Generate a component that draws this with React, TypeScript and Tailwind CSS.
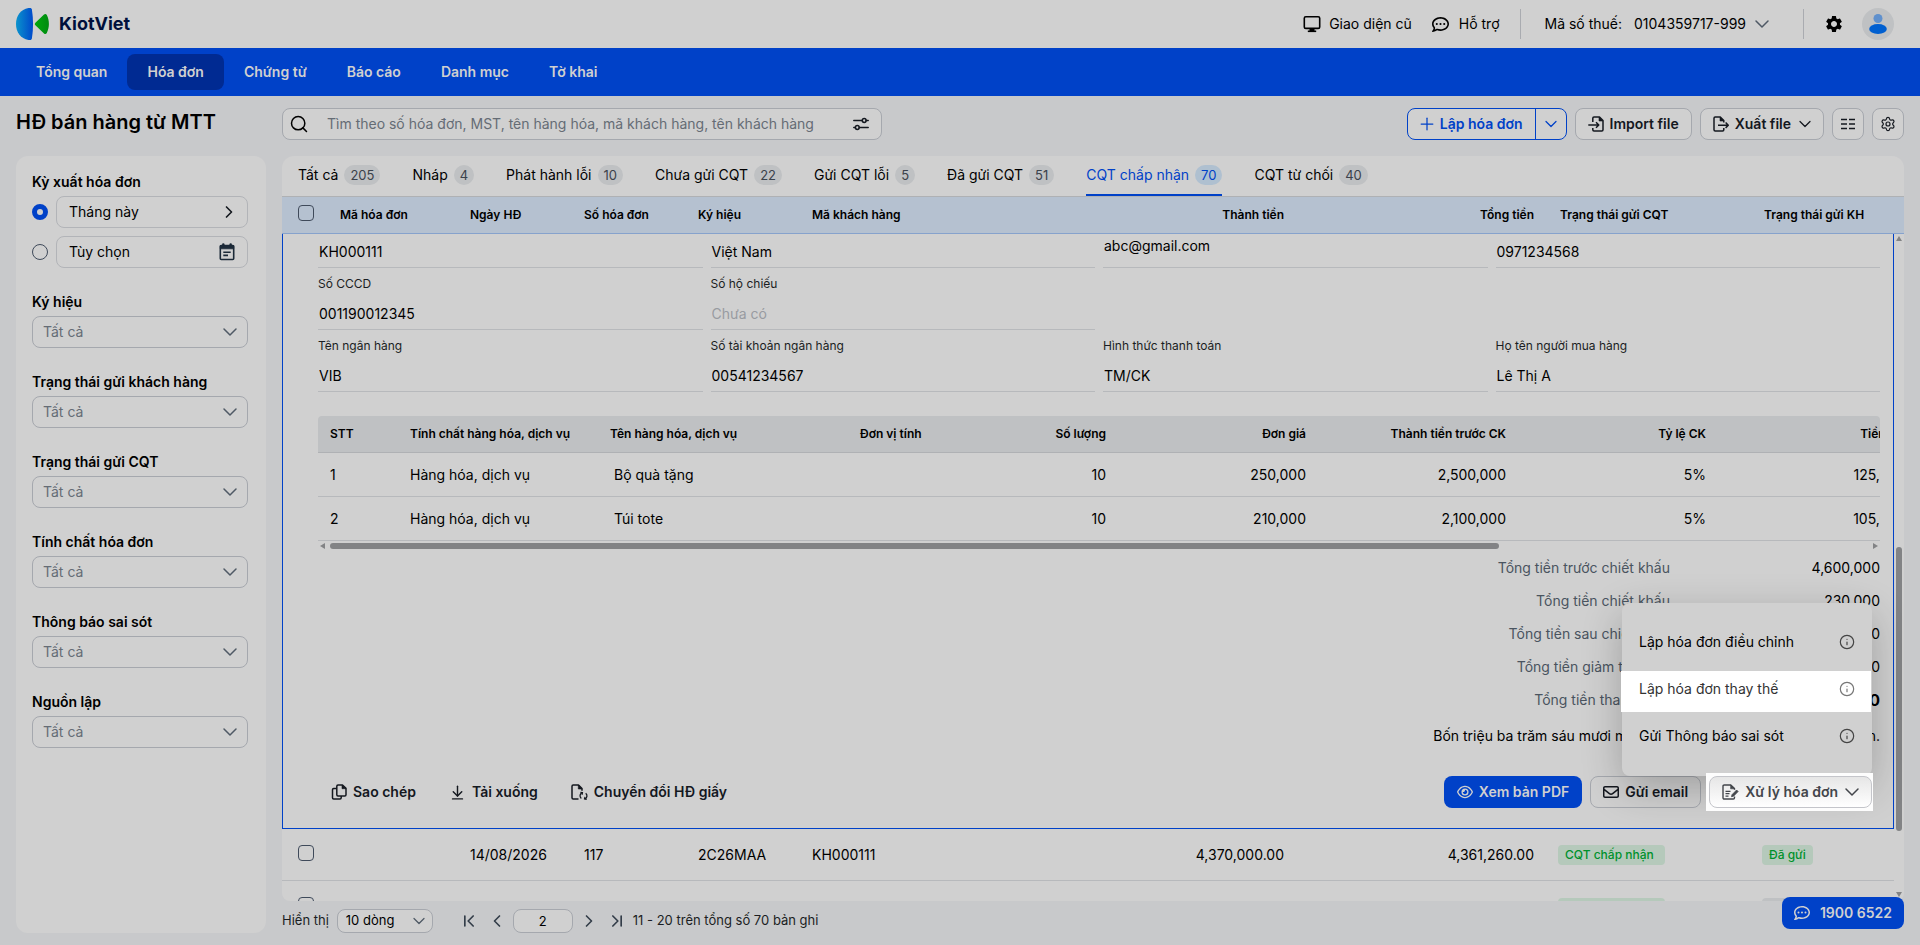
import type { ReactNode } from "react";
import {
  ArrowDownToLine,
  ChevronDown,
  ChevronFirst,
  ChevronLast,
  ChevronLeft,
  ChevronRight,
  Info,
  Plus,
  Search,
  Settings,
} from "lucide-react";
import { FaRegCommentDots, FaRegEnvelope, FaRegEye } from "react-icons/fa6";
import { MdSettings } from "react-icons/md";

const NAV = ["Tổng quan", "Hóa đơn", "Chứng từ", "Báo cáo", "Danh mục", "Tờ khai"];

const FILTERS = [
  { id: "symbol", label: "Ký hiệu" },
  { id: "customer-status", label: "Trạng thái gửi khách hàng" },
  { id: "tax-status", label: "Trạng thái gửi CQT" },
  { id: "kind", label: "Tính chất hóa đơn" },
  { id: "mistake", label: "Thông báo sai sót" },
  { id: "source", label: "Nguồn lập" },
];

const TABS = [
  { label: "Tất cả", count: 205 },
  { label: "Nháp", count: 4 },
  { label: "Phát hành lỗi", count: 10 },
  { label: "Chưa gửi CQT", count: 22 },
  { label: "Gửi CQT lỗi", count: 5 },
  { label: "Đã gửi CQT", count: 51 },
  { label: "CQT chấp nhận", count: 70 },
  { label: "CQT từ chối", count: 40 },
];

const ITEMS = [
  { name: "Bộ quà tặng", qty: "10", price: "250,000", amount: "2,500,000", rate: "5%", discount: "125,000" },
  { name: "Túi tote", qty: "10", price: "210,000", amount: "2,100,000", rate: "5%", discount: "105,000" },
];

const TOTALS = [
  { label: "Tổng tiền trước chiết khấu", value: "4,600,000" },
  { label: "Tổng tiền chiết khấu", value: "230,000" },
  { label: "Tổng tiền sau chiết khấu", value: "4,370,000" },
  { label: "Tổng tiền giảm trừ thuế", value: "8,740" },
];

const MENU = ["Lập hóa đơn điều chỉnh", "Lập hóa đơn thay thế", "Gửi Thông báo sai sót"];
const ACTIVE_MENU = "Lập hóa đơn thay thế";

/* ---------- icons ---------- */

function Logo() {
  return (
    <svg className="w-[33px] h-8" viewBox="0 0 33 32">
      <defs>
        <linearGradient id="logo-blue" x1="0" x2="1">
          <stop offset="0" stopColor="#0a93cc" />
          <stop offset="1" stopColor="#0049cb" />
        </linearGradient>
        <linearGradient id="logo-green" x1="0" x2="1">
          <stop offset="0" stopColor="#00a80c" />
          <stop offset="1" stopColor="#008a10" />
        </linearGradient>
      </defs>
      <path d="M12.5 0h1.6c1 0 1.6.6 1.8 1.5 1.5 9.500 1.500 19.500 0 29-.2.9-.8 1.500-1.800 1.500h-1.600C4.500 30.500 0 24 0 16S4.500 1.500 12.500 0z" fill="url(#logo-blue)" />
      <path d="M19.400 14.700 28 6.600c1-.9 2.200-.7 2.800.5 2.800 5.500 2.800 12.300 0 17.800-.6 1.200-1.800 1.400-2.800.5l-8.600-8.100c-.8-.8-.8-1.800 0-2.600z" fill="url(#logo-green)" />
    </svg>
  );
}

function MonitorIcon() {
  return (
    <svg className="w-[18px] h-[18px]" viewBox="0 0 18 18" fill="none" stroke="currentColor" strokeWidth="1.600">
      <rect x="1.300" y="1.800" width="15.400" height="11.600" rx="1.500" />
      <path d="M6.500 14h5v2h-5z" fill="currentColor" stroke="none" />
      <path d="M4.800 16.300h8.400" />
    </svg>
  );
}

function CalendarIcon() {
  return (
    <svg className="w-4 h-[18px]" viewBox="0 0 16 18" fill="none" stroke="currentColor" strokeWidth="1.600">
      <rect x="1.300" y="2.500" width="13.400" height="14" rx="1" />
      <path d="M1.300 2.500h13.400v3.300H1.300zM3.600.8h1.500v2H3.600zM10.900.8h1.500v2h-1.500z" fill="currentColor" strokeWidth=".8" />
      <path d="M4.300 9.200h7.400M4.300 12.400h4.700" />
    </svg>
  );
}

function SlidersIcon() {
  return (
    <svg className="w-4 h-[14px]" viewBox="0 0 16 14" fill="none" stroke="currentColor" strokeWidth="1.500" strokeLinecap="round">
      <path d="M.8 3.500h8.400M13.200 3.500h2M.8 10.500h1.400M6.300 10.500h8.900" />
      <circle cx="11.200" cy="3.500" r="1.900" />
      <circle cx="4.300" cy="10.500" r="1.900" />
    </svg>
  );
}

function ImportIcon() {
  return (
    <svg className="w-4 h-4" viewBox="0 0 16 16" fill="none" stroke="currentColor" strokeWidth="1.500" strokeLinejoin="round">
      <path d="M4.800 6V2.200C4.800 1.500 5.300 1 6 1h5.500L15 4.500v9.300c0 .7-.5 1.200-1.200 1.200H6c-.7 0-1.200-.5-1.200-1.200V12" />
      <path d="M11 1v4h4z" fill="currentColor" strokeWidth=".6" />
      <path d="M.3 9h10M8 6.200 10.800 9 8 11.800" />
    </svg>
  );
}

function ExportIcon() {
  return (
    <svg className="w-4 h-4" viewBox="0 0 16 16" fill="none" stroke="currentColor" strokeWidth="1.500" strokeLinejoin="round">
      <path d="M10.800 6.500V4.500L7.300 1H2.200C1.500 1 1 1.500 1 2.200v11.600c0 .7.500 1.200 1.200 1.200h7.400c.7 0 1.200-.5 1.200-1.200V12" />
      <path d="M7 1v4h4z" fill="currentColor" strokeWidth=".6" />
      <path d="M5 9.200h10M12.600 6.500l2.700 2.700-2.700 2.700" />
    </svg>
  );
}

function ColumnsIcon() {
  return (
    <svg className="w-[14px] h-3" viewBox="0 0 14 12" stroke="currentColor" strokeWidth="1.300">
      <path d="M0 1.500h6M8 1.500h6M0 6h6M8 6h6M0 10.500h6M8 10.500h6" />
    </svg>
  );
}

function CopyIcon() {
  return (
    <svg className="w-4 h-4" viewBox="0 0 16 16" fill="none" stroke="currentColor" strokeWidth="1.500" strokeLinejoin="round">
      <path d="M5.800 2.200C5.800 1.500 6.300 1 7 1h4.500L15 4.200v6.600c0 .7-.5 1.200-1.200 1.200H7c-.7 0-1.200-.5-1.200-1.200z" />
      <path d="M11 1v3.700h4z" fill="currentColor" strokeWidth=".6" />
      <path d="M5.800 4.500H2.700c-.7 0-1.200.5-1.200 1.200v8.100c0 .7.500 1.200 1.200 1.200H9c.7 0 1.200-.5 1.200-1.200V12" />
    </svg>
  );
}

function ConvertIcon() {
  return (
    <svg className="w-[17px] h-4" viewBox="0 0 17 16" fill="none" stroke="currentColor" strokeWidth="1.500" strokeLinejoin="round">
      <path d="M7.500 15H2.200C1.500 15 1 14.500 1 13.800V2.200C1 1.500 1.500 1 2.200 1h5.300L11 4.500v2.300" />
      <path d="M7.300 1v4H11z" fill="currentColor" strokeWidth=".6" />
      <path d="M11.300 8.600c-2.600.8-3 4.200-1 5.800M13.700 15c2.600-.8 3-4.200 1-5.800" strokeWidth="1.300" />
      <path d="M9.300 8.200l2.300.4-.6 2.200M15.700 15.400l-2.300-.4.6-2.200" strokeWidth="1.100" />
    </svg>
  );
}

function EditFileIcon() {
  return (
    <svg className="w-[17px] h-4" viewBox="0 0 17 16" fill="none" stroke="currentColor" strokeWidth="1.400" strokeLinejoin="round">
      <path d="M12.500 12.500v1.300c0 .7-.5 1.200-1.200 1.200H2.200C1.500 15 1 14.500 1 13.800V2.200C1 1.500 1.500 1 2.200 1h6.600l3.700 3.500v1.300" />
      <path d="M8.600 1v3.800h3.900z" fill="currentColor" strokeWidth=".6" />
      <path d="M3.500 7.300h5M3.500 9.700h4M3.500 12.200h3" strokeWidth="1.200" />
      <path d="m9.500 12.700.5-2L14.600 6l1.500 1.500-4.600 4.700z" fill="currentColor" strokeWidth=".8" />
    </svg>
  );
}

function Avatar() {
  return (
    <span className="flex w-8 h-8 items-center justify-center rounded-full bg-[#bfc1c3]">
      <svg className="w-[18px] h-5" viewBox="0 0 18 20">
        <circle cx="9" cy="4.500" r="4.500" fill="#5f90cd" />
        <ellipse cx="9" cy="15" rx="8.800" ry="5" fill="#005fd0" />
      </svg>
    </span>
  );
}

/* ---------- small parts ---------- */

interface ToolButtonProps {
  children: ReactNode;
  className?: string;
  label?: string;
}

function ToolButton({ children, className = "", label }: ToolButtonProps) {
  return (
    <button
      type="button"
      aria-label={label}
      className={`flex h-8 items-center gap-1.5 rounded-lg border border-[#a5a8ae] bg-[#d0d0d0] text-sm font-semibold text-[#14181f] ${className}`}
    >
      {children}
    </button>
  );
}

function Checkbox({ label }: { label: string }) {
  return (
    <input
      type="checkbox"
      aria-label={label}
      className="block w-4 h-4 appearance-none rounded border border-[#3f4a5a]"
    />
  );
}

function Field({ id, label, value, placeholder }: { id: string; label: string; value?: string; placeholder?: string }) {
  return (
    <div className="border-b border-[#b7b9bc] pt-2 pb-[5px]">
      <label htmlFor={id} className="block text-xs leading-4 text-[#1b1e23]">
        {label}
      </label>
      <input
        id={id}
        readOnly
        value={value ?? ""}
        placeholder={placeholder}
        className="mt-3 block h-5 w-full pl-px text-sm leading-5 placeholder:text-[#989ba1]"
      />
    </div>
  );
}

function Tag({ children, className = "" }: { children: ReactNode; className?: string }) {
  return (
    <span className={`inline-block h-5 rounded bg-[#b5c9bb] px-[7px] align-middle text-xs leading-5 font-medium text-[#00912b] ${className}`}>
      {children}
    </span>
  );
}

/* ---------- page sections ---------- */

function TopBar() {
  return (
    <header className="flex h-12 shrink-0 items-center bg-[#d0d0d0] pr-[26px] pl-4 text-sm">
      <a href="#home" className="flex items-center gap-2.5">
        <Logo />
        <span className="text-lg font-bold text-[#00103c]">KiotViet</span>
      </a>
      <div className="ml-auto flex items-center">
        <a href="#old" className="flex items-center gap-2">
          <MonitorIcon />
          Giao diện cũ
        </a>
        <a href="#help" className="ml-5 flex items-center gap-2.5">
          <FaRegCommentDots className="w-[17px] h-[17px]" />
          Hỗ trợ
        </a>
        <span className="mr-6 ml-5 h-[30px] w-px bg-[#a9abb0]" />
        <button type="button" className="flex items-center">
          <span>Mã số thuế:</span>
          <span className="mr-1 ml-3">0104359717-999</span>
          <ChevronDown className="w-6 h-6 text-[#4f5965]" strokeWidth={1.5} />
        </button>
        <span className="mr-5 ml-[29px] h-[30px] w-px bg-[#a9abb0]" />
        <button type="button" aria-label="Cài đặt" className="mr-[18px]">
          <MdSettings className="w-5 h-5" />
        </button>
        <button type="button" aria-label="Tài khoản">
          <Avatar />
        </button>
      </div>
    </header>
  );
}

function Sidebar() {
  return (
    <aside className="flex-1 rounded-xl bg-[#d0d0d0] py-4 pr-[18px] pl-4">
      <fieldset className="text-sm">
        <legend className="mb-1 font-semibold leading-5">Kỳ xuất hóa đơn</legend>
        <div className="flex items-center gap-2">
          <input
            type="radio"
            name="period"
            defaultChecked
            aria-label="Tháng này"
            className="w-4 h-4 appearance-none rounded-full border-[5px] border-[#0041c8]"
          />
          <button type="button" className="flex h-8 flex-1 items-center justify-between rounded-lg border border-[#b2b4b8] pr-2 pl-3">
            Tháng này
            <ChevronRight className="w-5 h-5 text-[#14181f]" />
          </button>
        </div>
        <div className="mt-2 flex items-center gap-2">
          <input
            type="radio"
            name="period"
            aria-label="Tùy chọn"
            className="w-4 h-4 appearance-none rounded-full border border-[#3f4a5a]"
          />
          <button type="button" className="flex h-8 flex-1 items-center justify-between rounded-lg border border-[#b2b4b8] px-3">
            Tùy chọn
            <span className="text-[#1c2a38]">
              <CalendarIcon />
            </span>
          </button>
        </div>
      </fieldset>

      {FILTERS.map((f) => (
        <div key={f.id} className="mt-6 text-sm">
          <label htmlFor={f.id} className="mb-1 block font-semibold leading-5">
            {f.label}
          </label>
          <div className="relative">
            <select id={f.id} className="h-8 w-full appearance-none rounded-lg border border-[#a5a8ae] px-2.5 text-[#656c75]">
              <option>Tất cả</option>
            </select>
            <ChevronDown
              className="pointer-events-none absolute top-1 right-1.5 w-6 h-6 text-[#4f5965]"
              strokeWidth={1.5}
            />
          </div>
        </div>
      ))}
    </aside>
  );
}

function Toolbar() {
  return (
    <div className="flex items-center gap-2">
      <div className="mr-auto flex h-8 w-[600px] items-center rounded-lg border border-[#a5a8ae] bg-[#d0d0d0] px-1.5">
        <Search className="w-5 h-5" strokeWidth={1.8} />
        <input
          type="search"
          aria-label="Tìm kiếm"
          placeholder="Tìm theo số hóa đơn, MST, tên hàng hóa, mã khách hàng, tên khách hàng"
          className="ml-[18px] flex-1 text-sm placeholder:text-[#656c75]"
        />
        <button type="button" aria-label="Bộ lọc" className="px-1.5 text-[#14181f]">
          <SlidersIcon />
        </button>
      </div>
      <div className="flex h-8 rounded-lg border border-[#0041c8] bg-[#d0d0d0] text-sm font-semibold text-[#0041c8]">
        <button type="button" className="flex items-center gap-[3px] border-r border-[#0041c8] pr-3 pl-[9px]">
          <Plus className="w-5 h-5" strokeWidth={1.5} />
          Lập hóa đơn
        </button>
        <button type="button" aria-label="Thêm lựa chọn" className="flex w-[30px] items-center justify-center">
          <ChevronDown className="w-5 h-5" strokeWidth={1.5} />
        </button>
      </div>
      <ToolButton className="px-3">
        <ImportIcon />
        Import file
      </ToolButton>
      <ToolButton className="pr-2 pl-3">
        <ExportIcon />
        Xuất file
        <ChevronDown className="-ml-0.5 w-5 h-5" strokeWidth={1.5} />
      </ToolButton>
      <ToolButton className="w-8 justify-center" label="Cột hiển thị">
        <ColumnsIcon />
      </ToolButton>
      <ToolButton className="w-8 justify-center" label="Thiết lập">
        <Settings className="w-4 h-4" strokeWidth={1.8} />
      </ToolButton>
    </div>
  );
}

function Tabs() {
  return (
    <div className="flex h-[41px] shrink-0 gap-8 border-b border-[#afb1b4] pl-4 text-sm">
      {TABS.map((tab) => {
        const active = tab.label === "CQT chấp nhận";
        return (
          <button
            key={tab.label}
            type="button"
            className={`flex items-center gap-1.5 border-b-2 ${active ? "border-[#0041c8] text-[#0041c8]" : "border-transparent"}`}
          >
            {tab.label}
            <span
              className={`h-5 rounded-full px-1.5 text-[13px] leading-5 ${
                active ? "bg-[#afc0d0] text-[#0041c8]" : "bg-[#bfc1c3] text-[#3b424b]"
              }`}
            >
              {tab.count}
            </span>
          </button>
        );
      })}
    </div>
  );
}

function ItemsTable() {
  return (
    <div className="mt-6">
      <div className="overflow-hidden rounded-t">
        <table className="w-[2060px] table-fixed border-separate border-spacing-0 text-sm">
          <thead>
            <tr className="h-[37px] bg-[#bfc1c3] text-left text-xs [&>th]:border-b [&>th]:border-[#afb1b4] [&>th]:px-3 [&>th]:font-semibold">
              <th className="w-20">STT</th>
              <th className="w-[200px]">Tính chất hàng hóa, dịch vụ</th>
              <th className="w-[250px]">Tên hàng hóa, dịch vụ</th>
              <th className="w-[150px]">Đơn vị tính</th>
              <th className="w-[120px] text-right">Số lượng</th>
              <th className="w-[200px] text-right">Đơn giá</th>
              <th className="w-[200px] text-right">Thành tiền trước CK</th>
              <th className="w-[200px] text-right">Tỷ lệ CK</th>
              <th className="w-[200px] text-right">Tiền CK</th>
              <th />
            </tr>
          </thead>
          <tbody>
            {ITEMS.map((item, i) => (
              <tr key={item.name} className="h-11 [&>td]:border-b [&>td]:border-[#b7b9bc] [&>td]:px-3">
                <td>{i + 1}</td>
                <td>Hàng hóa, dịch vụ</td>
                <td>
                  <span className="pl-1">{item.name}</span>
                </td>
                <td />
                <td className="text-right">{item.qty}</td>
                <td className="text-right">{item.price}</td>
                <td className="text-right">{item.amount}</td>
                <td className="text-right">{item.rate}</td>
                <td className="text-right">{item.discount}</td>
                <td />
              </tr>
            ))}
          </tbody>
        </table>
      </div>
      {/* horizontal scrollbar */}
      <div className="flex h-2.5 items-center gap-[5px] px-0.5">
        <span className="border-y-[3px] border-r-[5px] border-y-transparent border-r-[#828385]" />
        <span className="flex-1">
          <span className="block h-1.5 w-19/25 rounded-full bg-[#828385]" />
        </span>
        <span className="border-y-[3px] border-l-[5px] border-y-transparent border-l-[#828385]" />
      </div>
    </div>
  );
}

function ProcessMenu() {
  return (
    <div className="relative">
      <div
        role="menu"
        className="absolute right-0 bottom-full w-[250px] rounded-lg bg-[#d0d0d0] pt-[15px] pb-[17px] text-sm font-normal text-black shadow-[0_12px_40px_rgba(0,0,0,0.24)]"
      >
        {MENU.map((label) => {
          const active = label === ACTIVE_MENU;
          return (
            <button
              key={label}
              type="button"
              role="menuitem"
              className={`relative flex h-[47px] w-full items-center justify-between px-[17px] ${active ? "text-[#333]" : ""}`}
            >
              {active && <span className="absolute top-1.5 right-px bottom-0 -left-px bg-white" />}
              <span className="relative">{label}</span>
              <Info className={`relative w-4 h-4 ${active ? "text-[#777]" : "text-[#444]"}`} strokeWidth={1.8} />
            </button>
          );
        })}
      </div>
      <span className="absolute -inset-y-[3px] right-[-1px] -left-[3px] bg-[#fdfdfd]" />
      <button
        type="button"
        className="relative flex h-8 items-center gap-1.5 rounded-lg border border-[#c4c5ca] bg-linear-to-b from-[#e6e6e6] to-white pr-[7px] pl-3 text-sm font-semibold text-[#43464b]"
      >
        <EditFileIcon />
        Xử lý hóa đơn
        <ChevronDown className="-ml-1 w-6 h-6" strokeWidth={1.5} />
      </button>
    </div>
  );
}

function InvoiceDetail() {
  return (
    <div className="border-x border-b border-[#0041c8] pr-[13px] pb-5 pl-[35px]">
      <div className="grid grid-cols-4 gap-x-2 text-sm leading-5">
        <div className="border-b border-[#b7b9bc] pt-2 pb-[5px] pl-px">KH000111</div>
        <div className="border-b border-[#b7b9bc] pt-2 pb-[5px] pl-px">Việt Nam</div>
        <div className="border-b border-[#b7b9bc] pt-0.5 pl-px">abc@gmail.com</div>
        <div className="border-b border-[#b7b9bc] pt-2 pb-[5px] pl-px">0971234568</div>
        <Field id="cccd" label="Số CCCD" value="001190012345" />
        <Field id="passport" label="Số hộ chiếu" placeholder="Chưa có" />
        <span className="col-span-2" />
        <Field id="bank" label="Tên ngân hàng" value="VIB" />
        <Field id="account" label="Số tài khoản ngân hàng" value="00541234567" />
        <Field id="payment" label="Hình thức thanh toán" value="TM/CK" />
        <Field id="buyer" label="Họ tên người mua hàng" value="Lê Thị A" />
      </div>

      <ItemsTable />

      <dl className="text-right text-sm">
        {TOTALS.map((row) => (
          <div key={row.label} className="flex h-[33px] items-center justify-end">
            <dt className="text-[#4a545f]">{row.label}</dt>
            <dd className="w-[210px]">{row.value}</dd>
          </div>
        ))}
        <div className="flex h-[33px] items-center justify-end">
          <dt className="text-[#4a545f]">Tổng tiền thanh toán</dt>
          <dd className="w-[210px] text-base font-bold">4,361,260</dd>
        </div>
      </dl>
      <p className="text-right text-sm leading-10">
        Bốn triệu ba trăm sáu mươi mốt nghìn hai trăm sáu mươi đồng chẵn.
      </p>

      <div className="mt-5 mr-2 ml-[13px] flex items-center text-sm font-semibold text-[#14181f]">
        <div className="mr-auto flex gap-[33px]">
          <button type="button" className="flex items-center gap-1.5">
            <CopyIcon />
            Sao chép
          </button>
          <button type="button" className="flex items-center gap-1.5">
            <ArrowDownToLine className="w-[17px] h-[17px]" />
            Tải xuống
          </button>
          <button type="button" className="flex items-center gap-1.5">
            <ConvertIcon />
            Chuyển đổi HĐ giấy
          </button>
        </div>
        <div className="flex gap-2">
          <button type="button" className="flex h-8 items-center gap-1.5 rounded-lg bg-[#0041c8] px-[13px] text-[#d0d0d0]">
            <FaRegEye className="w-4 h-4" />
            Xem bản PDF
          </button>
          <ToolButton className="px-3">
            <FaRegEnvelope className="w-4 h-4" />
            Gửi email
          </ToolButton>
          <ProcessMenu />
        </div>
      </div>
    </div>
  );
}

function InvoiceTable() {
  return (
    <div className="flex min-h-0 flex-1 overflow-hidden">
      <div className="min-w-0 flex-1">
        <table className="w-full table-fixed border-separate border-spacing-0 text-sm">
          <thead>
            <tr className="h-[37px] bg-[#b5c1d0] text-left text-xs [&>th]:border-b [&>th]:border-[#86a2cc] [&>th]:px-3 [&>th]:font-semibold">
              <th className="w-[46px]">
                <div className="pb-1 pl-1">
                  <Checkbox label="Chọn tất cả" />
                </div>
              </th>
              <th className="w-[130px]">Mã hóa đơn</th>
              <th className="w-[114px]">Ngày HĐ</th>
              <th className="w-[114px]">Số hóa đơn</th>
              <th className="w-[114px]">Ký hiệu</th>
              <th>Mã khách hàng</th>
              <th className="w-[295px] text-right">Thành tiền</th>
              <th className="w-[250px] text-right">Tổng tiền</th>
              <th className="w-[204px]">
                <span className="pl-0.5">Trạng thái gửi CQT</span>
              </th>
              <th className="w-[144px]">
                <span className="pl-0.5">Trạng thái gửi KH</span>
              </th>
            </tr>
          </thead>
          <tbody>
            <tr>
              <td colSpan={10} className="p-0">
                <InvoiceDetail />
              </td>
            </tr>
            <tr className="h-[52px] [&>td]:border-b [&>td]:border-[#b7b9bc] [&>td]:px-3">
              <td>
                <div className="pb-1 pl-1">
                  <Checkbox label="Chọn hóa đơn 117" />
                </div>
              </td>
              <td />
              <td>14/08/2026</td>
              <td>117</td>
              <td>2C26MAA</td>
              <td>KH000111</td>
              <td className="text-right">4,370,000.00</td>
              <td className="text-right">4,361,260.00</td>
              <td>
                <Tag className="w-[107px]">CQT chấp nhận</Tag>
              </td>
              <td>
                <Tag>Đã gửi</Tag>
              </td>
            </tr>
            <tr className="h-[52px] [&>td]:px-3">
              <td>
                <div className="pb-1 pl-1">
                  <Checkbox label="Chọn hóa đơn 116" />
                </div>
              </td>
              <td colSpan={7} />
              <td>
                <span className="inline-block h-5 w-[107px] rounded bg-[#b5c9bb] align-middle" />
              </td>
              <td>
                <span className="inline-block h-5 w-[70px] rounded bg-[#bfc1c3] align-middle" />
              </td>
            </tr>
          </tbody>
        </table>
      </div>
      {/* vertical scrollbar */}
      <div className="flex w-2.5 flex-col items-center">
        <span className="h-[37px] w-full border-b border-[#86a2cc] bg-[#b5c1d0]" />
        <span className="mt-0.5 border-x-[3px] border-b-[5px] border-x-transparent border-b-[#828385]" />
        <span className="flex w-1.5 flex-1 flex-col justify-end">
          <span className="mb-[61px] h-[284px] rounded-full bg-[#828385]" />
        </span>
        <span className="mb-1 border-x-[3px] border-t-[5px] border-x-transparent border-t-[#828385]" />
      </div>
    </div>
  );
}

function Pagination() {
  return (
    <nav className="flex h-6 shrink-0 items-center text-[13px] text-[#1b1e23]">
      <label htmlFor="page-size" className="mr-2">
        Hiển thị
      </label>
      <div className="relative">
        <select id="page-size" className="h-6 w-24 appearance-none rounded-lg border border-[#a5a8ae] bg-[#d0d0d0] px-2 text-black">
          <option>10 dòng</option>
        </select>
        <ChevronDown
          className="pointer-events-none absolute top-0.5 right-1 w-5 h-5 text-[#4f5965]"
          strokeWidth={1.5}
        />
      </div>
      <button type="button" aria-label="Trang đầu" className="ml-[26px] text-[#333d49]">
        <ChevronFirst className="w-5 h-5" />
      </button>
      <button type="button" aria-label="Trang trước" className="ml-2 text-[#333d49]">
        <ChevronLeft className="w-5 h-5" />
      </button>
      <input
        aria-label="Trang"
        defaultValue="2"
        className="mx-1.5 h-6 w-[60px] rounded-lg border border-[#a5a8ae] bg-[#d0d0d0] text-center text-black"
      />
      <button type="button" aria-label="Trang sau" className="text-[#333d49]">
        <ChevronRight className="w-5 h-5" />
      </button>
      <button type="button" aria-label="Trang cuối" className="ml-2 text-[#333d49]">
        <ChevronLast className="w-5 h-5" />
      </button>
      <span className="ml-1.5">11 - 20 trên tổng số 70 bản ghi</span>
    </nav>
  );
}

export default function App() {
  return (
    <div className="flex h-screen flex-col overflow-hidden bg-[#c8c9cb] font-['Inter',sans-serif] text-black">
      <TopBar />
      <nav className="flex h-12 shrink-0 items-center bg-[#0041c8] px-4 text-sm font-semibold text-[#d0d0d0]">
        {NAV.map((item) => (
          <a
            key={item}
            href="#nav"
            className={`flex h-9 items-center rounded-lg px-5 ${item === "Hóa đơn" ? "bg-[#002a92]" : ""}`}
          >
            {item}
          </a>
        ))}
      </nav>

      <div className="flex min-h-0 flex-1 gap-4 px-4 pt-3 pb-3">
        <div className="flex w-[250px] shrink-0 flex-col">
          <h1 className="mb-5 text-xl leading-7 font-semibold">HĐ bán hàng từ MTT</h1>
          <Sidebar />
        </div>

        <main className="flex min-w-0 flex-1 flex-col">
          <Toolbar />
          <section className="mt-4 mb-2 flex min-h-0 flex-1 flex-col overflow-hidden rounded-xl rounded-b-lg bg-[#d0d0d0]">
            <Tabs />
            <InvoiceTable />
          </section>
          <Pagination />
        </main>
      </div>

      <a
        href="tel:19006522"
        className="fixed right-4 bottom-4 flex h-8 items-center gap-2.5 rounded-lg bg-[#0041c8] px-3 text-sm font-semibold text-[#d0d0d0]"
      >
        <FaRegCommentDots className="w-4 h-4" />
        1900 6522
      </a>
    </div>
  );
}
